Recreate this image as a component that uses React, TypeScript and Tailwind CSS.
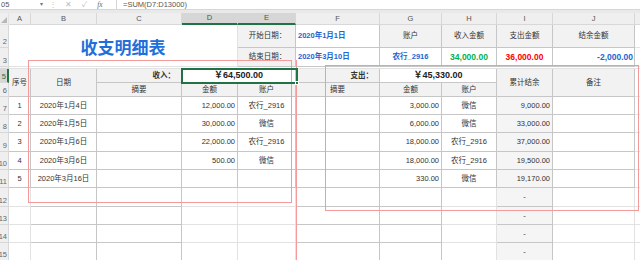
import React from "react";

type CellProps = {
    className: string;
    children?: React.ReactNode;
};

function Cell({ className, children }: CellProps) {
    return (
        <div className={`flex items-center overflow-hidden whitespace-nowrap border-r border-b ${className}`}>
            {children}
        </div>
    );
}

const letters = [
    { col: "col-start-2", label: "A" },
    { col: "col-start-3", label: "B" },
    { col: "col-start-4", label: "C" },
    { col: "col-start-5", label: "D", sel: true },
    { col: "col-start-6", label: "E", sel: true },
    { col: "col-start-7", label: "F" },
    { col: "col-start-8", label: "G" },
    { col: "col-start-9", label: "H" },
    { col: "col-start-10", label: "I" },
    { col: "col-start-11", label: "J" },
    { col: "col-start-12", label: "" },
];

const rowStarts = [
    "row-start-7",
    "row-start-8",
    "row-start-9",
    "row-start-10",
    "row-start-11",
    "row-start-12",
    "row-start-13",
    "row-start-14",
    "row-start-15",
];

const data = [
    { no: "1", date: "2020年1月4日", inAmt: "12,000.00", inAcc: "农行_2916", outAmt: "3,000.00", outAcc: "微信", bal: "9,000.00" },
    { no: "2", date: "2020年1月5日", inAmt: "30,000.00", inAcc: "微信", outAmt: "6,000.00", outAcc: "微信", bal: "33,000.00" },
    { no: "3", date: "2020年1月6日", inAmt: "22,000.00", inAcc: "农行_2916", outAmt: "18,000.00", outAcc: "农行_2916", bal: "37,000.00" },
    { no: "4", date: "2020年3月6日", inAmt: "500.00", inAcc: "微信", outAmt: "18,000.00", outAcc: "农行_2916", bal: "19,500.00" },
    { no: "5", date: "2020年3月16日", inAmt: "", inAcc: "", outAmt: "330.00", outAcc: "微信", bal: "19,170.00" },
    { no: "", date: "", inAmt: "", inAcc: "", outAmt: "", outAcc: "", bal: "-" },
    { no: "", date: "", inAmt: "", inAcc: "", outAmt: "", outAcc: "", bal: "-" },
    { no: "", date: "", inAmt: "", inAcc: "", outAmt: "", outAcc: "", bal: "-" },
    { no: "", date: "", inAmt: "", inAcc: "", outAmt: "", outAcc: "", bal: "-" },
];

const tb = "border-[#c6c6c6]";
const gl = "border-[#e2e2e2]";
const hd = "bg-[#f2f2f2]";

export default function App() {
    return (
        <div className="relative w-[640px] h-[260px] overflow-hidden bg-white text-[7.5px] text-[#333] font-['Liberation_Sans','Noto_Sans_CJK_SC',sans-serif]">
            {/* formula bar */}
            <div className="flex h-[10px] items-center border-b border-[#d6d6d6] bg-white text-[#555]">
                <div className="flex w-[46px] items-center justify-between pl-[1px] pr-[3px]">
                    <span>05</span>
                    <span className="text-[6px] text-[#777]">▾</span>
                </div>
                <div className="flex w-[14px] justify-center text-[#bbb]">⋮</div>
                <div className="flex w-[56px] items-center gap-[10px] pl-[5px] text-[#bbb]">
                    <span>✕</span>
                    <span>✓</span>
                    <span className="italic text-[#666] font-['Liberation_Serif',serif]">fx</span>
                </div>
                <div className="h-full flex-1 border-l border-[#d6d6d6] pl-[6px] leading-[10px]">=SUM(D7:D13000)</div>
            </div>
            <div className="h-[3px] bg-[#e9e9e9]" />

            {/* sheet */}
            <div className="grid grid-cols-[9px_22px_66px_85px_56px_58px_84px_62px_55px_56px_82px_15px] grid-rows-[12px_23px_19px_2px_14px_14px_18px_18px_19px_18px_18px_19px_18px_18px_18px]">
                {/* column header */}
                <Cell className={`col-start-1 row-start-1 ${gl} bg-[#efefef] justify-end items-end`}>
                    <svg width="6" height="6" viewBox="0 0 6 6" className="mb-[1px] mr-[1px]">
                        <path d="M6 0 L6 6 L0 6 Z" fill="#b8b8b8" />
                    </svg>
                </Cell>
                {letters.map((l) => (
                    <Cell
                        key={l.label + l.col}
                        className={`${l.col} row-start-1 justify-center border-[#d8d8d8] ${
                            l.sel ? "bg-[#d6d6d6] text-[#1e6b41] border-b-2 border-b-[#217346]" : "bg-[#efefef] text-[#555]"
                        }`}
                    >
                        {l.label}
                    </Cell>
                ))}

                {/* row headers */}
                {[
                    ["row-start-2", "2"],
                    ["row-start-3", "3"],
                    ["row-start-4", ""],
                    ["row-start-5", "5"],
                    ["row-start-6", "6"],
                    ["row-start-7", "7"],
                    ["row-start-8", "8"],
                    ["row-start-9", "9"],
                    ["row-start-10", "10"],
                    ["row-start-11", "11"],
                    ["row-start-12", "12"],
                    ["row-start-13", "13"],
                    ["row-start-14", "14"],
                    ["row-start-15", "15"],
                ].map(([r, n]) => (
                    <Cell
                        key={r}
                        className={`col-start-1 ${r} justify-end items-end pr-[1px] ${
                            n === "5" ? "bg-[#d6d6d6] text-[#1e6b41] border-r-2 border-r-[#217346] border-[#d8d8d8]" : "bg-[#efefef] text-[#666] border-[#d8d8d8]"
                        }`}
                    >
                        <span className="leading-[10px]">{n}</span>
                    </Cell>
                ))}

                {/* title block */}
                <Cell className="col-start-2 col-span-4 row-start-2 row-span-2 border-[#e2e2e2] justify-center pt-[2px]">
                    <span className="text-[17px] font-bold text-[#1f6fdb] font-['Noto_Sans_CJK_SC',sans-serif]">收支明细表</span>
                </Cell>

                <Cell className={`col-start-6 row-start-2 ${tb} ${hd} justify-center pl-[2px]`}>开始日期：</Cell>
                <Cell className={`col-start-7 row-start-2 ${tb} pl-[2px] font-bold text-[#1c64d0]`}>2020年1月1日</Cell>
                <Cell className={`col-start-8 row-start-2 ${tb} ${hd} justify-center`}>账户</Cell>
                <Cell className={`col-start-9 row-start-2 ${tb} ${hd} justify-center`}>收入金额</Cell>
                <Cell className={`col-start-10 row-start-2 ${tb} ${hd} justify-center`}>支出金额</Cell>
                <Cell className={`col-start-11 row-start-2 ${tb} ${hd} justify-center`}>结余金额</Cell>
                <Cell className={`col-start-12 row-start-2 ${gl}`} />

                <Cell className={`col-start-6 row-start-3 ${tb} ${hd} justify-center pl-[2px]`}>结束日期：</Cell>
                <Cell className={`col-start-7 row-start-3 ${tb} pl-[2px] font-bold text-[#1c64d0]`}>2020年3月10日</Cell>
                <Cell className={`col-start-8 row-start-3 ${tb} justify-center font-bold text-[#1c64d0]`}>农行_2916</Cell>
                <Cell className={`col-start-9 row-start-3 ${tb} justify-center text-[8.5px] font-bold text-[#00b050]`}>34,000.00</Cell>
                <Cell className={`col-start-10 row-start-3 ${tb} justify-center text-[8.5px] font-bold text-[#ff0000]`}>36,000.00</Cell>
                <Cell className={`col-start-11 row-start-3 ${tb} justify-end pr-[1px] text-[8.5px] font-bold text-[#1c64d0]`}>-2,000.00</Cell>
                <Cell className={`col-start-12 row-start-3 ${gl}`} />

                {/* tiny row 4 */}
                <Cell className={`col-start-2 col-span-11 row-start-4 ${gl} border-r-0`} />

                {/* table header */}
                <Cell className={`col-start-2 row-start-5 row-span-2 ${tb} ${hd} justify-center`}>序号</Cell>
                <Cell className={`col-start-3 row-start-5 row-span-2 ${tb} ${hd} justify-center`}>日期</Cell>
                <Cell className={`col-start-4 row-start-5 ${tb} ${hd} justify-end pr-[6px] font-bold`}>收入：</Cell>
                <Cell className={`col-start-5 col-span-2 row-start-5 ${tb} bg-white justify-center text-[9px] font-bold text-[#222]`}>￥64,500.00</Cell>
                <Cell className={`col-start-7 row-start-5 ${tb} ${hd} justify-end pr-[6px] font-bold`}>支出：</Cell>
                <Cell className={`col-start-8 col-span-2 row-start-5 ${tb} bg-white justify-center text-[9px] font-bold text-[#222]`}>￥45,330.00</Cell>
                <Cell className={`col-start-10 row-start-5 row-span-2 ${tb} ${hd} justify-center`}>累计结余</Cell>
                <Cell className={`col-start-11 row-start-5 row-span-2 ${tb} ${hd} justify-center`}>备注</Cell>
                <Cell className={`col-start-12 row-start-5 row-span-2 ${gl}`} />

                <Cell className={`col-start-4 row-start-6 ${tb} ${hd} justify-center`}>摘要</Cell>
                <Cell className={`col-start-5 row-start-6 ${tb} ${hd} justify-center`}>金额</Cell>
                <Cell className={`col-start-6 row-start-6 ${tb} ${hd} justify-center`}>账户</Cell>
                <Cell className={`col-start-7 row-start-6 ${tb} ${hd} justify-center`}>摘要</Cell>
                <Cell className={`col-start-8 row-start-6 ${tb} ${hd} justify-center`}>金额</Cell>
                <Cell className={`col-start-9 row-start-6 ${tb} ${hd} justify-center`}>账户</Cell>

                {/* data rows */}
                {data.map((d, i) => {
                    const r = rowStarts[i];
                    const b = i < 5 ? tb : gl;
                    return (
                        <React.Fragment key={r}>
                            <Cell className={`col-start-2 ${r} ${b} justify-center`}>{d.no}</Cell>
                            <Cell className={`col-start-3 ${r} ${tb} justify-center`}>{d.date}</Cell>
                            <Cell className={`col-start-4 ${r} ${tb}`} />
                            <Cell className={`col-start-5 ${r} ${b} justify-end pr-[2px]`}>{d.inAmt}</Cell>
                            <Cell className={`col-start-6 ${r} ${b} justify-center`}>{d.inAcc}</Cell>
                            <Cell className={`col-start-7 ${r} ${tb}`} />
                            <Cell className={`col-start-8 ${r} ${tb} justify-end pr-[2px]`}>{d.outAmt}</Cell>
                            <Cell className={`col-start-9 ${r} ${b} justify-center`}>{d.outAcc}</Cell>
                            <Cell className={`col-start-10 ${r} ${tb} bg-[#f5f5f5] ${d.bal === "-" ? "justify-center" : "justify-end pr-[2px]"}`}>
                                {d.bal}
                            </Cell>
                            <Cell className={`col-start-11 ${r} ${b}`} />
                            <Cell className={`col-start-12 ${r} ${gl}`} />
                        </React.Fragment>
                    );
                })}
            </div>

            {/* overlays: pink frames, page line, selection */}
            <div className="absolute left-[28px] top-[60px] h-[143px] w-[264px] border border-[#f59a9a]" />
            <div className="absolute left-[325px] top-[65px] h-[146px] w-[314px] border border-[#f59a9a]" />
            <div className="absolute left-[296px] top-[60px] h-[200px] w-px bg-[#f59a9a]" />
            <div className="absolute left-[181px] top-[68px] h-[16px] w-[117px] border-2 border-[#217346]">
                <div className="absolute -bottom-[3px] -right-[3px] h-[4px] w-[4px] border border-white bg-[#217346]" />
            </div>
        </div>
    );
}
